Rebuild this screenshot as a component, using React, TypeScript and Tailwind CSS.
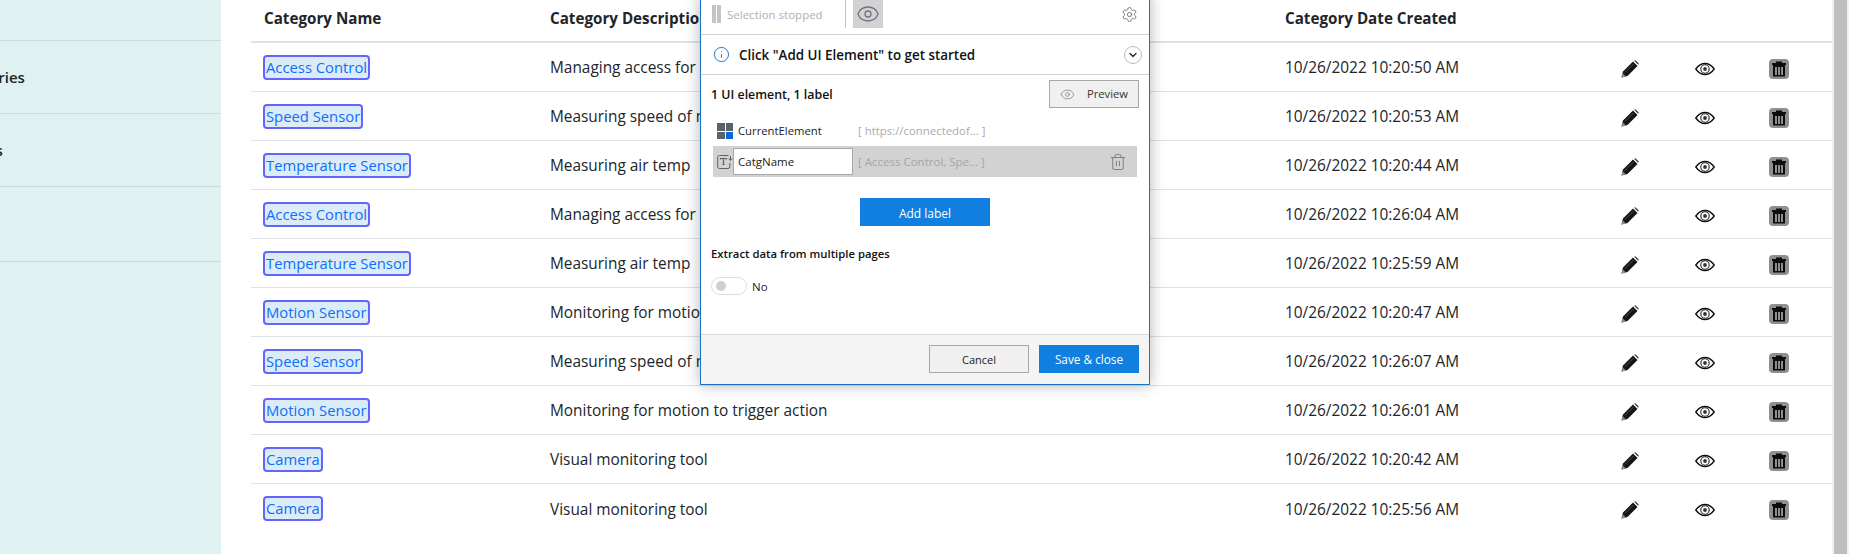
import { Eye, Settings, Info, ChevronDown, Trash2 } from 'lucide-react';

const rows = [
  { name: 'Access Control', desc: 'Managing access for', date: '10/26/2022 10:20:50 AM' },
  { name: 'Speed Sensor', desc: 'Measuring speed of moving', date: '10/26/2022 10:20:53 AM' },
  { name: 'Temperature Sensor', desc: 'Measuring air temp', date: '10/26/2022 10:20:44 AM' },
  { name: 'Access Control', desc: 'Managing access for', date: '10/26/2022 10:26:04 AM' },
  { name: 'Temperature Sensor', desc: 'Measuring air temp', date: '10/26/2022 10:25:59 AM' },
  { name: 'Motion Sensor', desc: 'Monitoring for motion to trigger action', date: '10/26/2022 10:20:47 AM' },
  { name: 'Speed Sensor', desc: 'Measuring speed of moving', date: '10/26/2022 10:26:07 AM' },
  { name: 'Motion Sensor', desc: 'Monitoring for motion to trigger action', date: '10/26/2022 10:26:01 AM' },
  { name: 'Camera', desc: 'Visual monitoring tool', date: '10/26/2022 10:20:42 AM' },
  { name: 'Camera', desc: 'Visual monitoring tool', date: '10/26/2022 10:25:56 AM' },
];

const gridCols = 'grid grid-cols-[287px_735px_336px_74px_74px_1fr] items-center pl-3';

function PencilIcon() {
  return (
    <svg width="18" height="18" viewBox="0 0 18 18" className="block">
      <path d="M0.5 17.5 L2 11.5 L12 1.5 L16.5 6 L6.5 16 Z" fill="#151515" />
      <path d="M0.5 17.5 L1.6 13 L5 16.4 Z" fill="#888" />
      <path d="M13.2 0.8 L14.4 0.3 L17.7 3.6 L17.2 4.8 Z" fill="#333" />
      <path d="M4 12.5 L12.5 4" stroke="#666" strokeWidth="0.7" />
    </svg>
  );
}

function EyeIcon() {
  return (
    <svg width="20" height="14" viewBox="0 0 20 14" fill="none" className="block">
      <path d="M0.8 7 C4 2.5 7 1.5 10 1.5 C13 1.5 16 2.5 19.2 7 C16 11.5 13 12.5 10 12.5 C7 12.5 4 11.5 0.8 7 Z" stroke="#111" strokeWidth="1.4" />
      <circle cx="10" cy="7" r="4.2" stroke="#222" strokeWidth="1.1" />
      <circle cx="10" cy="7" r="1.9" fill="#333" />
    </svg>
  );
}

function TrashIcon() {
  return (
    <svg width="20" height="20" viewBox="0 0 20 20" className="block">
      <rect x="0" y="0" width="20" height="20" rx="4" fill="#8f8f8f" />
      <path d="M3 4 H7 V2.5 H13 V4 H17 V6 H16 V17.5 H4 V6 H3 Z" fill="#0c0c0c" />
      <path d="M7 8 V16 M10 8 V16 M13 8 V16" stroke="#e8e8e8" strokeWidth="1.2" />
    </svg>
  );
}

function LabelIcon() {
  return (
    <svg width="16" height="16" viewBox="0 0 16 16" fill="none" className="shrink-0">
      <path d="M11.5 1.5 H2.5 Q0.7 1.5 0.7 3.3 V12.7 Q0.7 14.5 2.5 14.5 H11 Q12.8 14.5 12.8 12.7 V9" stroke="#59636c" strokeWidth="1" />
      <path d="M3.5 5.5 V4.5 H9.5 V5.5 M6.5 4.5 V10.5 M5.3 10.5 H7.7" stroke="#59636c" strokeWidth="1.2" />
      <path d="M13.5 2 V6 M11.8 4.6 L13.5 6.5 L15.2 4.6" stroke="#59636c" strokeWidth="1" />
    </svg>
  );
}

function Popup() {
  return (
    <div className="absolute left-[700px] top-[-6px] w-[450px] h-[391px] bg-white border border-[#1a72c4] shadow-[0_0_14px_rgba(0,0,0,0.3)] flex flex-col font-['Open_Sans',sans-serif] text-[11.5px] text-[#222]">
      {/* Toolbar, its top lies above the page */}
      <div className="h-[40px] shrink-0 flex items-start pt-[5px] pl-[11px] pr-[11px] border-b border-[#d0d0d0]">
        <div className="h-[28px] flex items-center">
          <div className="w-[9px] h-[18px] flex justify-between mr-[6px]">
            <div className="w-[4px] bg-[#c4c4c4]" />
            <div className="w-[4px] bg-[#c4c4c4]" />
          </div>
          <span className="text-[#b0b0b0] w-[118px] pt-[1px]">Selection stopped</span>
        </div>
        <div className="w-px h-[28px] bg-[#c4c4c4] mr-[7px]" />
        <div className="w-[30px] h-[28px] bg-[#d2d2d2] flex items-center justify-center">
          <Eye size={24} strokeWidth={1.3} className="text-[#6d7680]" />
        </div>
        <div className="ml-auto h-[28px] flex items-center">
          <Settings size={17} strokeWidth={1.2} className="text-[#666]" />
        </div>
      </div>
      <div className="h-[40px] shrink-0 flex items-center pl-[12px] pr-[7px] border-b border-[#d0d0d0]">
        <Info size={17} strokeWidth={1.4} className="text-[#1a78d0]" />
        <span className="ml-[9px] pt-[1px] font-semibold text-[#111] text-[13.4px]">Click "Add UI Element" to get started</span>
        <div className="ml-auto w-[18px] h-[18px] rounded-full border border-[#bbb] flex items-center justify-center">
          <ChevronDown size={12} strokeWidth={3} className="text-[#333]" />
        </div>
      </div>
      <div className="flex items-center pl-[10px] pr-[10px] h-[38px] shrink-0">
        <span className="pt-[3px] font-semibold text-[#111] text-[12.4px]">1 UI element, 1 label</span>
        <button className="ml-auto w-[90px] h-[28px] bg-[#f0f0f0] border border-[#a8a8a8] flex items-center justify-center gap-[12px] text-[#333] text-[11.2px]">
          <Eye size={15} strokeWidth={1.2} className="text-[#777]" />
          <span className="pt-[1px]">Preview</span>
        </button>
      </div>
      <div className="flex items-center h-[30px] pl-[16px] mt-[3px]">
        <div className="grid grid-cols-2 gap-px w-[16px] h-[16px]">
          <div className="bg-[#59636c]" />
          <div className="bg-[#59636c]" />
          <div className="bg-[#59636c]" />
          <div className="bg-[#0b66d6]" />
        </div>
        <span className="ml-[5px] w-[120px] text-[11.3px]">CurrentElement</span>
        <span className="text-[#aaa] text-[11.4px]">[ https://connectedof... ]</span>
      </div>
      <div className="flex items-center h-[31px] ml-[12px] mr-[12px] bg-[#d2d2d2] pl-[4px] pr-[10px]">
        <LabelIcon />
        <div className="w-[120px] h-[27px] bg-white border border-[#a8a8a8] flex items-center pl-[4px]">CatgName</div>
        <span className="ml-[5px] text-[#a5a5a5] text-[11.5px]">[ Access Control, Spe... ]</span>
        <Trash2 size={18} strokeWidth={1.2} className="ml-auto text-[#777]" />
      </div>
      <button className="self-center mt-[21px] w-[130px] h-[28px] pt-[3px] bg-[#107fe0] text-white text-[12px]">Add label</button>
      <div className="mt-[20px] pl-[10px] font-semibold text-[11.3px] text-[#111]">Extract data from multiple pages</div>
      <div className="mt-[14px] pl-[10px] flex items-center">
        <div className="w-[36px] h-[18px] rounded-full border border-[#ddd] flex items-center pl-[4px]">
          <div className="w-[10px] h-[10px] rounded-full bg-[#cfcfcf]" />
        </div>
        <span className="ml-[5px] pt-[1px]">No</span>
      </div>
      <div className="mt-auto h-[50px] bg-[#f4f4f4] border-t border-[#d9d9d9] flex items-start justify-end gap-[10px] pt-[10px] pr-[10px]">
        <button className="w-[100px] h-[28px] pt-[2px] bg-[#f0f0f0] border border-[#a8a8a8] text-[11px]">Cancel</button>
        <button className="w-[100px] h-[28px] pt-[2px] bg-[#107fe0] text-white text-[11.8px]">Save &amp; close</button>
      </div>
    </div>
  );
}

export default function App() {
  return (
    <div className="relative w-[1849px] h-[554px] overflow-hidden bg-white flex font-['Open_Sans',sans-serif] text-[#212529]">
      {/* Sidebar, cut off on the left */}
      <div className="w-[221px] shrink-0 bg-[#dff1f0] font-semibold text-[15px]">
        <div className="h-[41px] border-b border-[#c9dcdb]" />
        <div className="h-[73px] border-b border-[#c9dcdb] flex items-center overflow-hidden">
          <span className="ml-[-52px]">Categories</span>
        </div>
        <div className="h-[73px] border-b border-[#c9dcdb] flex items-center overflow-hidden">
          <span className="ml-[-38px]">Users</span>
        </div>
        <div className="h-[75px] border-b border-[#c9dcdb]" />
      </div>

      {/* Table */}
      <div className="ml-[30px] w-[1581px] shrink-0 text-[15.4px]">
        <div className={`${gridCols} h-[43px] pb-[4px] border-b-2 border-[#dee2e6] font-bold text-[15.2px]`}>
          <span className="pl-px">Category Name</span>
          <span>Category Description</span>
          <span>Category Date Created</span>
        </div>
        {rows.map((row, i) => (
          <div key={i} className={`${gridCols} h-[49px] ${i < rows.length - 1 ? 'border-b border-[#dee2e6]' : ''}`}>
            <div>
              <span className="inline-block border-2 border-[#6464ff] rounded-[4px] bg-[#dcecf7] text-[#0d6efd] text-[14.8px] leading-[21px] px-[1px]">{row.name}</span>
            </div>
            <span className="pt-[2px]">{row.desc}</span>
            <span className="pt-[2px]">{row.date}</span>
            <div className="pt-[3px]"><PencilIcon /></div>
            <div className="pt-[3px]"><EyeIcon /></div>
            <div className="pt-[3px]"><TrashIcon /></div>
          </div>
        ))}
      </div>

      {/* Scrollbar */}
      <div className="ml-auto w-[17px] shrink-0 bg-[#f0f0f0] px-[2px]">
        <div className="h-full w-[13px] bg-[#bebebe]" />
      </div>

      <Popup />
    </div>
  );
}
